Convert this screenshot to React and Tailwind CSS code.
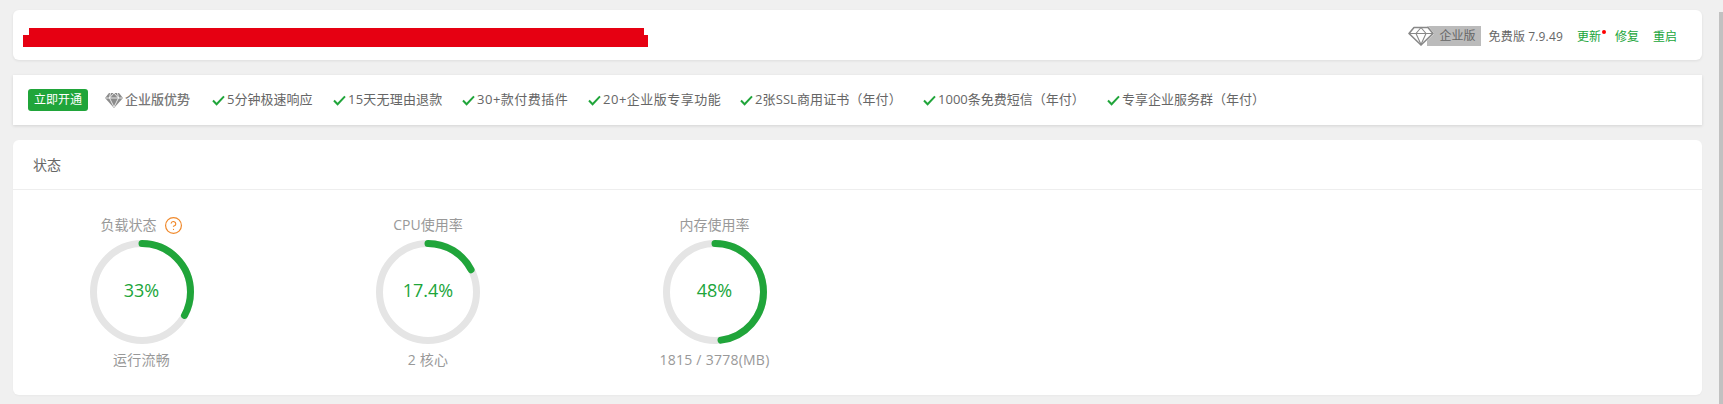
import { HelpCircle } from "lucide-react";

const perks = [
    { text: "5分钟极速响应", width: "w-[121px]" },
    { text: "15天无理由退款", width: "w-[129px] tracking-[0.2px]" },
    { text: "30+款付费插件", width: "w-[126px] tracking-[0.5px]" },
    { text: "20+企业版专享功能", width: "w-[152px] tracking-[0.5px]" },
    { text: "2张SSL商用证书（年付）", width: "w-[183px] tracking-[0.1px]" },
    { text: "1000条免费短信（年付）", width: "w-[184px]" },
    { text: "专享企业服务群（年付）", width: "w-[160px]" },
];

const gauges = [
    { title: "负载状态", help: true, value: 33, label: "33%", sub: "运行流畅" },
    { title: "CPU使用率", value: 17.4, label: "17.4%", sub: "2 核心" },
    { title: "内存使用率", value: 48, label: "48%", sub: "1815 / 3778(MB)" },
];

const CheckMark = () => (
    <svg viewBox="0 0 13 11" className="w-[13px] h-[11px] shrink-0 mr-[2px]">
        <path d="M1 5.5 L4.6 9.2 L12 1.4" fill="none" stroke="#20a53a" strokeWidth="2" />
    </svg>
);

const SolidGem = () => (
    <svg viewBox="0 0 18 16" className="w-[18px] h-[16px] shrink-0">
        <path d="M4 1 H14 L18 6 L9 16 L0 6 Z" fill="#8c8c8c" />
        <path d="M0.5 6 H17.5 M5.5 1 L4.5 6 L9 15 L13.5 6 L12.5 1 M4.5 6 L9 1 L13.5 6" fill="none" stroke="#fff" strokeWidth="0.8" />
    </svg>
);

const OutlineGem = () => (
    <svg viewBox="0 0 26 20" className="relative z-10 w-[26px] h-[20px] -mr-[7px] shrink-0">
        <path d="M6 1.5 H20 L25 7.5 L13 19 L1 7.5 Z" fill="#fff" stroke="#fff" strokeWidth="2" />
        <path d="M6 1.5 H20 L25 7.5 L13 19 L1 7.5 Z" fill="#fff" stroke="#888" strokeWidth="1.6" strokeLinejoin="round" />
        <path d="M1 7.5 H25 M8 7.5 L13 18.5 L18 7.5 M8 7.5 L13 1.5 L18 7.5" fill="none" stroke="#888" strokeWidth="1.1" />
    </svg>
);

const Gauge = ({ title, help, value, label, sub }) => (
    <div className="w-[200px] flex flex-col items-center">
        <div className="h-5 flex items-center text-sm text-[#999]">
            {title}
            {help && <HelpCircle className="w-[19px] h-[19px] ml-[7px] text-[#f0892b]" strokeWidth={1.5} />}
        </div>
        <div className="relative w-[104px] h-[104px] mt-[5px]">
            <svg viewBox="0 0 104 104" className="w-full h-full -rotate-90">
                <circle cx="52" cy="52" r="48.5" fill="none" stroke="#e5e5e5" strokeWidth="7" />
                <circle
                    cx="52"
                    cy="52"
                    r="48.5"
                    fill="none"
                    stroke="#20a53a"
                    strokeWidth="7"
                    strokeLinecap="round"
                    pathLength="100"
                    strokeDasharray={`${value} 100`}
                />
            </svg>
            <div className="absolute inset-0 pb-[4px] flex items-center justify-center text-lg text-[#20a53a]">{label}</div>
        </div>
        <div className="h-5 mt-[6px] flex items-center text-sm tracking-[0.25px] text-[#999] whitespace-nowrap">{sub}</div>
    </div>
);

const App = () => {
    return (
        <div className="relative h-screen overflow-hidden bg-[#f0f0f0] pt-[10px] pl-[13px] pr-[21px] font-['Open_Sans','Noto_Sans_CJK_SC',sans-serif]">
            <div className="h-[50px] bg-white rounded-md shadow-[0_1px_3px_rgba(0,0,0,0.08)] flex items-center justify-between pl-[10px] pr-[25px]">
                <div className="flex flex-col mt-[5px]">
                    <div className="ml-[6px] w-[615px] h-[7px] bg-[#e60012]" />
                    <div className="w-[625px] h-[12px] bg-[#e60012]" />
                </div>
                <div className="flex items-center text-xs mt-[2px]">
                    <OutlineGem />
                    <div className="h-5 w-[54px] bg-[#bbbbbb] text-[#666] flex items-center pl-[13px] mr-[8px]">企业版</div>
                    <span className="text-[#666] tracking-[0.15px] mr-[14px] pt-[1px]">免费版 7.9.49</span>
                    <a className="relative text-[#20a53a] mr-[14px] pt-[1px]">
                        更新
                        <span className="absolute -right-[5px] top-[2px] w-1 h-1 rounded-full bg-[#ff0000]" />
                    </a>
                    <a className="text-[#20a53a] mr-[14px] pt-[1px]">修复</a>
                    <a className="text-[#20a53a] pt-[1px]">重启</a>
                </div>
            </div>

            <div className="h-[50px] mt-[15px] bg-white shadow-[0_1px_3px_rgba(0,0,0,0.12)] flex items-center pl-[15px] text-[13px] text-[#666] whitespace-nowrap">
                <span className="h-[22px] w-[60px] rounded-[3px] bg-[#20a53a] text-white text-xs flex items-center justify-center mr-[17px]">立即开通</span>
                <SolidGem />
                <span className="ml-[2px] mr-[22px] font-medium text-[#777]">企业版优势</span>
                {perks.map((perk) => (
                    <span key={perk.text} className={`flex items-center shrink-0 ${perk.width}`}>
                        <CheckMark />
                        {perk.text}
                    </span>
                ))}
            </div>

            <div className="h-[255px] mt-[15px] bg-white rounded-md shadow-[0_1px_2px_rgba(0,0,0,0.03)]">
                <div className="h-[50px] border-b border-[#eeeeee] flex items-center pl-[20px] text-sm text-[#666]">状态</div>
                <div className="flex gap-[86.5px] pl-[28.5px] pt-[25px]">
                    {gauges.map((gauge) => (
                        <Gauge key={gauge.title} {...gauge} />
                    ))}
                </div>
            </div>

            <div className="absolute right-0 top-[12px] bottom-0 w-1 bg-[#c1c1c1]" />
        </div>
    );
};

export default App;
